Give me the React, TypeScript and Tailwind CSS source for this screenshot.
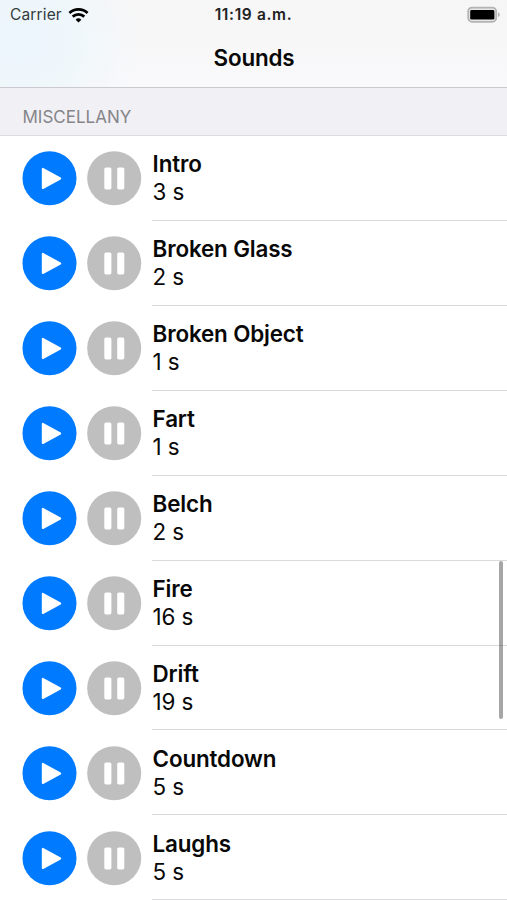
import React from 'react';

interface Sound {
  title: string;
  duration: string;
}

const sounds: Sound[] = [
  { title: 'Intro', duration: '3 s' },
  { title: 'Broken Glass', duration: '2 s' },
  { title: 'Broken Object', duration: '1 s' },
  { title: 'Fart', duration: '1 s' },
  { title: 'Belch', duration: '2 s' },
  { title: 'Fire', duration: '16 s' },
  { title: 'Drift', duration: '19 s' },
  { title: 'Countdown', duration: '5 s' },
  { title: 'Laughs', duration: '5 s' },
];

const WifiIcon: React.FC = () => (
  <svg className="ml-[6px] h-[15px] w-[21px]" viewBox="0 0 21 15" fill="none" stroke="#000" strokeWidth="2.8">
    <path d="M1.4 5a13.4 13.4 0 0 1 18.2 0" />
    <path d="M4.7 8.6a8.6 8.6 0 0 1 11.6 0" />
    <path d="M10.5 14.6L7.6 11.7a4.2 4.2 0 0 1 5.8 0z" fill="#000" stroke="none" />
  </svg>
);

const BatteryIcon: React.FC = () => (
  <svg className="h-[18px] w-[34px]" viewBox="0 0 34 18">
    <rect x="1.2" y="1.6" width="28" height="14.2" rx="3.8" fill="#e6e6e6" stroke="#b4b4b4" strokeWidth="1.8" />
    <rect x="3.2" y="4" width="24.2" height="9.6" rx="1.4" fill="#000" />
    <path d="M31.2 6.6c1.9.6 1.9 3.8 0 4.4z" fill="#a5a5a5" />
  </svg>
);

const PlayButton: React.FC = () => (
  <button aria-label="Play" className="h-[54px] w-[54px]">
    <svg className="h-[54px] w-[54px] overflow-visible" viewBox="0 0 54 54">
      <circle cx="26.5" cy="27.2" r="27" fill="#007aff" />
      <path d="M19.8 17.9v19.2l17.4-9.6z" fill="#fff" stroke="#fff" strokeWidth="2" strokeLinejoin="round" />
    </svg>
  </button>
);

const PauseButton: React.FC = () => (
  <button aria-label="Pause" className="h-[54px] w-[54px]">
    <svg className="h-[54px] w-[54px] overflow-visible" viewBox="0 0 54 54">
      <circle cx="27.2" cy="27.2" r="27" fill="#bfbfbf" />
      <rect x="17.3" y="16.4" width="7.1" height="22" rx="1.6" fill="#fff" />
      <rect x="30.2" y="16.4" width="7.1" height="22" rx="1.6" fill="#fff" />
    </svg>
  </button>
);

const SoundRow: React.FC<{ sound: Sound }> = ({ sound }) => (
  <li className="flex h-[84.93px] pl-[22.5px]">
    <div className="flex gap-[10.8px] pt-[15.3px]">
      <PlayButton />
      <PauseButton />
    </div>
    <div className="ml-[10.7px] flex-1 border-b border-[#dadadc] pt-[14.45px] pl-[0.6px] text-[22.4px] leading-[27.9px] tracking-[-0.15px] text-[#080808]">
      <p className="font-semibold">{sound.title}</p>
      <p>{sound.duration}</p>
    </div>
  </li>
);

const App: React.FC = () => {
  return (
    <div className="relative h-[900px] w-[507px] overflow-hidden bg-white font-['Inter',sans-serif]">
      <header className="h-[88px] border-b border-[#cbcbcf] bg-[radial-gradient(ellipse_120px_110px_at_20px_40px,#ebf5fc_0%,#f0f7fb_50%,transparent_100%),linear-gradient(to_bottom,#f6f6f6,#f9f9fb)]">
        <div className="grid h-[30px] grid-cols-3 items-center">
          <div className="flex items-center pl-[10px] text-[15.5px] tracking-[0.15px] text-[#333c40]">
            Carrier
            <WifiIcon />
          </div>
          <div className="text-center text-[15.5px] font-semibold tracking-[0.65px] whitespace-nowrap text-[#222]">11:19 a.m.</div>
          <div className="flex justify-end pr-[6px] pb-px">
            <BatteryIcon />
          </div>
        </div>
        <h1 className="pt-[14px] pl-px text-center text-[22.4px] leading-[28px] font-semibold tracking-[-0.15px] text-[#080808]">Sounds</h1>
      </header>
      <h2 className="h-[48px] border-b border-[#dcdce0] bg-[#f0f0f5] pt-[18px] pl-[22.5px] text-[17px] leading-[22px] text-[#858589]">
        MISCELLANY
      </h2>
      <ul>
        {sounds.map((sound) => (
          <SoundRow key={sound.title} sound={sound} />
        ))}
      </ul>
      {/* scroll indicator */}
      <div className="absolute top-[561px] right-[4px] h-[158px] w-[4px] rounded-full bg-black/35" />
    </div>
  );
};

export default App;
